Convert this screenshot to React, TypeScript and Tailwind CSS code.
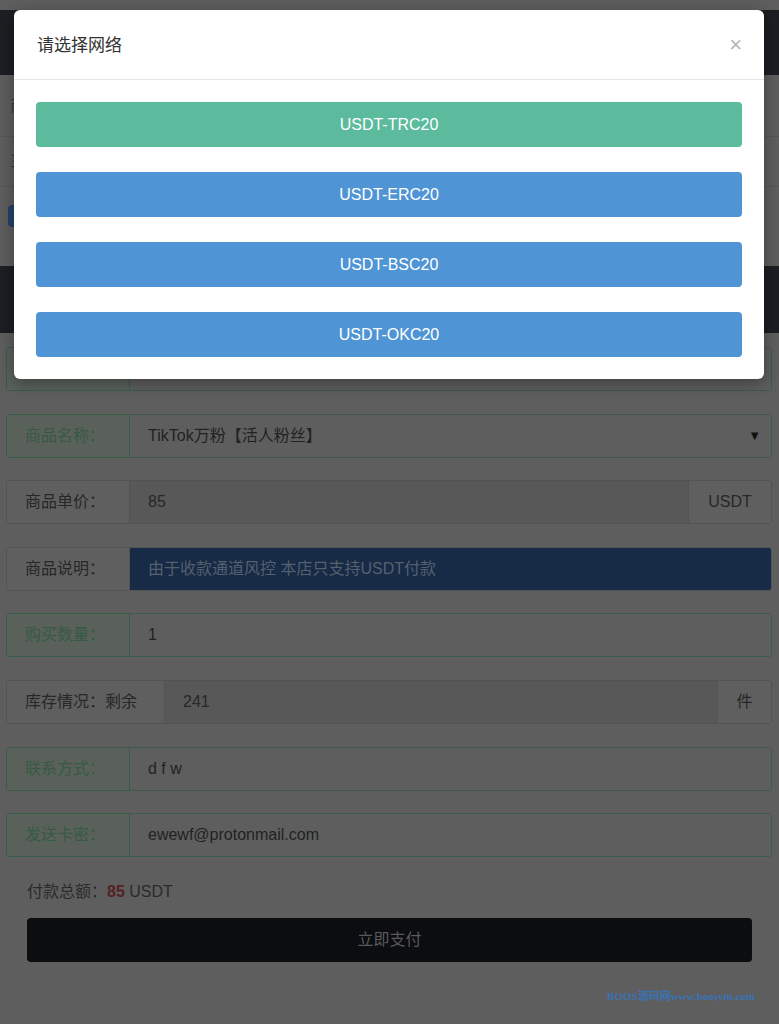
const font = { fontFamily: '"Liberation Sans", "Noto Sans CJK SC", sans-serif' };

type Row = {
  label: string;
  value: string;
  kind: "ok" | "plain" | "note";
  labelW?: string;
  addon?: string;
  addonW?: string;
  select?: boolean;
};

const rows: Row[] = [
  { label: "商品分类：", value: "TikTok", kind: "ok", select: true },
  { label: "商品名称：", value: "TikTok万粉【活人粉丝】", kind: "ok", select: true },
  { label: "商品单价：", value: "85", kind: "plain", addon: "USDT", addonW: "w-[83px]" },
  { label: "商品说明：", value: "由于收款通道风控 本店只支持USDT付款", kind: "note" },
  { label: "购买数量：", value: "1", kind: "ok" },
  { label: "库存情况：剩余", value: "241", kind: "plain", labelW: "w-[158px]", addon: "件", addonW: "w-[54px]" },
  { label: "联系方式：", value: "d f w", kind: "ok" },
  { label: "发送卡密：", value: "ewewf@protonmail.com", kind: "ok" },
];

function FormRow({ r }: { r: Row }) {
  const ok = r.kind === "ok";
  return (
    <div
      className={`flex h-[44px] ml-[6px] mr-[7px] rounded-[3px] border text-[16px] ${
        ok ? "border-[#3b5c49]" : "border-[#535353]"
      }`}
    >
      <div
        className={`${r.labelW ?? "w-[123px]"} shrink-0 flex items-center pl-[18px] border-r ${
          ok ? "bg-[#5a615b] text-[#365a42] border-[#3b5c49]" : "bg-[#5f5f5f] text-[#272727] border-[#535353]"
        }`}
      >
        {r.label}
      </div>
      <div
        className={`flex-1 flex items-center pl-[18px] pr-[10px] ${
          r.kind === "note"
            ? "bg-[#172b47] text-[#55606d] rounded-r-[2px]"
            : r.addon
            ? "bg-[#585858] text-[#272727]"
            : "bg-[#5e5e5e] text-[#222]"
        }`}
      >
        <span className="flex-1">{r.value}</span>
        {r.select && <span className="text-[13px] text-[#111]">▼</span>}
      </div>
      {r.addon && (
        <div
          className={`${r.addonW} shrink-0 flex items-center justify-center border-l border-[#535353] bg-[#5f5f5f] text-[#272727]`}
        >
          {r.addon}
        </div>
      )}
    </div>
  );
}

const networks = [
  { name: "USDT-TRC20", cls: "bg-[#5bbb9c]" },
  { name: "USDT-ERC20", cls: "bg-[#4f95d5]" },
  { name: "USDT-BSC20", cls: "bg-[#4f95d5]" },
  { name: "USDT-OKC20", cls: "bg-[#4f95d5]" },
];

export default function App() {
  return (
    <div className="relative w-[779px] h-[1024px] overflow-hidden bg-[#5e5e5e]" style={font}>
      {/* page behind the dialog, already dimmed */}
      <div className="flex flex-col">
        <div className="h-[10px]" />
        <div className="h-[65px] bg-[#1b1e22]" />
        <div className="flex flex-col text-[16px] text-[#3a3a3a]">
          <div className="h-[62px] flex items-center pl-[10px] border-b border-[#555]">商品信息</div>
          <div className="h-[50px] flex items-center pl-[10px] border-b border-[#555]">三 商品列表</div>
          <div className="h-[79px] pl-[8px] pt-[18px]">
            <div className="w-[80px] h-[22px] rounded-[4px] bg-[#22436b]" />
          </div>
        </div>
        <div className="h-[67px] bg-[#1b1e22]" />
        <div className="flex flex-col gap-[22.6px] pt-[14px]">
          {rows.map((r) => (
            <FormRow key={r.label} r={r} />
          ))}
        </div>
        <div className="pl-[27px] pt-[24px] text-[16px] text-[#2a2a2a] leading-[22px]">
          付款总额：<span className="font-bold text-[#552222]">85</span> USDT
        </div>
        <div className="mx-[27px] mt-[15px] h-[44px] rounded-[4px] bg-[#0b0d10] flex items-center justify-center text-[16px] text-[#5a5a5a]">
          立即支付
        </div>
        <div className="flex justify-end pr-[24px] pt-[26px]">
          <span
            className="text-[11px] font-bold text-[#3a72b4]"
            style={{ fontFamily: '"Liberation Serif", "Noto Sans CJK SC", serif' }}
          >
            BOOS源码网www.boosym.com
          </span>
        </div>
      </div>

      {/* dialog */}
      <div className="absolute top-[10px] left-[14px] w-[750px] rounded-[6px] bg-white shadow-[0_4px_16px_rgba(0,0,0,0.35)]">
        <div className="h-[70px] flex items-center justify-between pl-[23px] pr-[22px] border-b border-[#e5e5e5]">
          <span className="text-[17px] text-[#333] pt-[2px]">请选择网络</span>
          <span className="text-[22px] leading-none text-[#b5b5b5]">×</span>
        </div>
        <div className="flex flex-col gap-[25px] px-[22px] pt-[22px] pb-[22px]">
          {networks.map((n) => (
            <div
              key={n.name}
              className={`${n.cls} h-[45px] rounded-[4px] flex items-center justify-center text-white text-[16px]`}
            >
              {n.name}
            </div>
          ))}
        </div>
      </div>
    </div>
  );
}
